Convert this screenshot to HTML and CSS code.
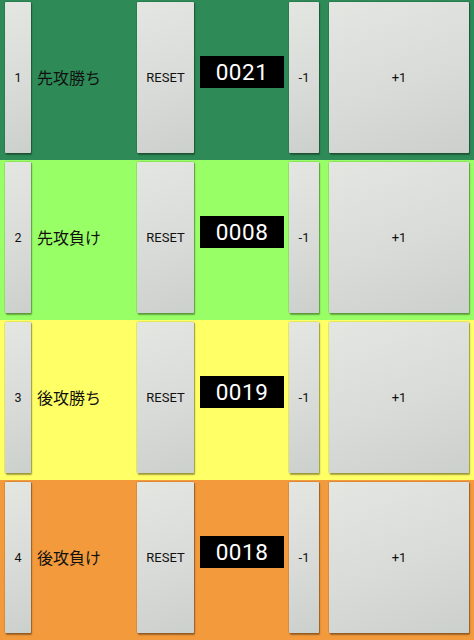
FILE: index.html
```html
<!DOCTYPE html>
<html>
<head>
<meta charset="utf-8">
<link rel="stylesheet" href="styles.css">
</head>
<body>
<div class="screen">
  <div class="row r1">
    <div class="btn num">1</div>
    <div class="label">先攻勝ち</div>
    <div class="btn reset">RESET</div>
    <div class="counter">0021</div>
    <div class="btn minus">-1</div>
    <div class="btn plus">+1</div>
  </div>
  <div class="row r2">
    <div class="btn num">2</div>
    <div class="label">先攻負け</div>
    <div class="btn reset">RESET</div>
    <div class="counter">0008</div>
    <div class="btn minus">-1</div>
    <div class="btn plus">+1</div>
  </div>
  <div class="row r3">
    <div class="btn num">3</div>
    <div class="label">後攻勝ち</div>
    <div class="btn reset">RESET</div>
    <div class="counter">0019</div>
    <div class="btn minus">-1</div>
    <div class="btn plus">+1</div>
  </div>
  <div class="row r4">
    <div class="btn num">4</div>
    <div class="label">後攻負け</div>
    <div class="btn reset">RESET</div>
    <div class="counter">0018</div>
    <div class="btn minus">-1</div>
    <div class="btn plus">+1</div>
  </div>
</div>
</body>
</html>
```
FILE: styles.css
```css
html, body {
  margin: 0;
  padding: 0;
}
body {
  width: 474px;
  height: 640px;
  overflow: hidden;
  font-family: Roboto, "Noto Sans CJK JP", sans-serif;
  color: #111;
}
.screen {
  display: flex;
  flex-direction: column;
  height: 640px;
}
.row {
  flex: 1;
  display: flex;
  align-items: stretch;
  padding: 1.5px 5px 7.5px 5px;
}
.r1 { background: #2e8b57; }
.r2 { background: #99ff66; }
.r3 { background: #ffff66; }
.r4 { background: #f39a3c; }

.btn {
  display: flex;
  align-items: center;
  justify-content: center;
  font-size: 13px;
  color: #111;
  background: linear-gradient(160deg, #e4e6e2 0%, #d8dbd7 55%, #ccd0cc 100%);
  border-radius: 1px;
  box-shadow: 0 0 0 0.5px rgba(0,0,0,0.18), 1px 1.5px 1.5px rgba(0,0,0,0.35);
}
.num {
  width: 26px;
  font-size: 12.5px;
}
.label {
  width: 100px;
  margin-left: 6px;
  display: flex;
  align-items: center;
  font-family: "Noto Sans CJK JP", sans-serif;
  font-size: 16px;
  color: #111;
}
.reset {
  width: 57px;
}
.counter {
  align-self: center;
  width: 84px;
  height: 32px;
  margin-left: 6px;
  margin-bottom: 10px;
  background: #000;
  color: #fff;
  font-size: 22.5px;
  letter-spacing: 0.5px;
  display: flex;
  align-items: center;
  justify-content: center;
}
.minus {
  width: 30px;
  margin-left: 5px;
}
.plus {
  width: 140px;
  margin-left: 10px;
}
```
